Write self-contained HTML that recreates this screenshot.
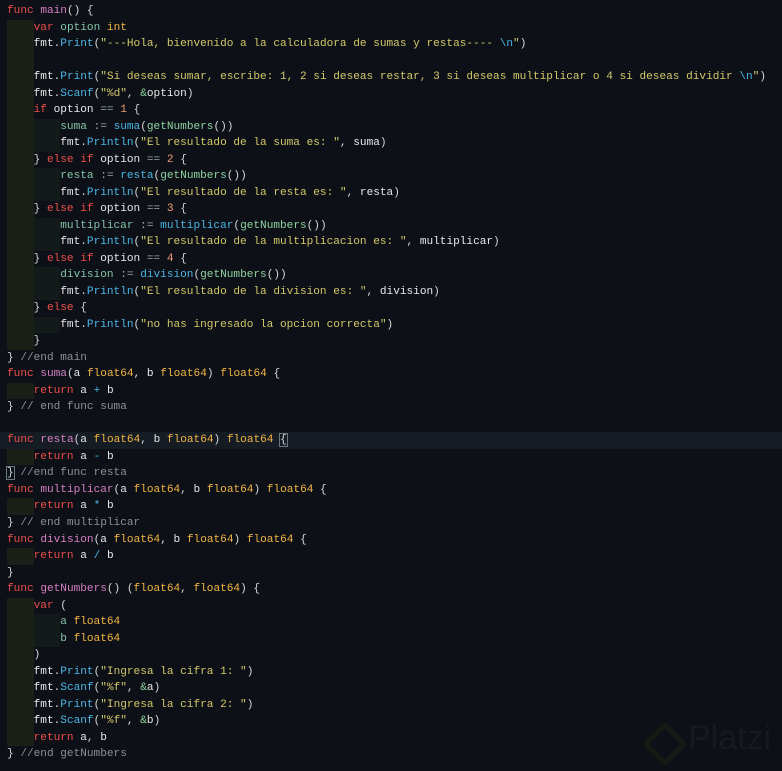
<!DOCTYPE html>
<html><head><meta charset="utf-8"><style>
html,body{margin:0;padding:0;background:#0d1117;width:782px;height:771px;overflow:hidden}
.c{position:absolute;left:7px;top:3px;font-family:"Liberation Mono","DejaVu Sans Mono",monospace;font-size:11.1px;color:#d6d6d6;white-space:normal}
.l{height:16.53px;line-height:16.53px;position:relative;white-space:pre}
.hl{background:#161c24;margin-left:-7px;padding-left:7px;width:775px}
.g1{display:inline-block;width:4ch;background:#1a1f17;height:16.53px;vertical-align:top}
.g2{display:inline-block;width:4ch;background:#121b19;height:16.53px;vertical-align:top}
.k{color:#ee4e4a}.f{color:#d77fc4}.v{color:#85c4a6}.s{color:#d3c86a}.t{color:#f2b544}
.p{color:#e8e8e8}.m{color:#4cb5e6}.n{color:#f29a78}.cm{color:#8b9099}.o{color:#9aa6b0}.e{color:#4cb5e6}
.gn{color:#8fd3a0}.bx{outline:1px solid #6b7a80}
.logo{position:absolute;left:643px;top:722px;width:40px;height:40px}
.pl{position:absolute;left:688px;top:719px;font-family:"Liberation Sans",sans-serif;font-size:34px;color:#141a20}
</style></head><body>
<div class="c">
<div class="l"><span class="k">func</span> <span class="f">main</span>() {</div>
<div class="l"><span class="g1"></span><span class="k">var</span> <span class="v">option</span> <span class="t">int</span></div>
<div class="l"><span class="g1"></span><span class="p">fmt</span>.<span class="m">Print</span>(<span class="s">"---Hola, bienvenido a la calculadora de sumas y restas---- </span><span class="e">\n</span><span class="s">"</span>)</div>
<div class="l"><span class="g1"></span></div>
<div class="l"><span class="g1"></span><span class="p">fmt</span>.<span class="m">Print</span>(<span class="s">"Si deseas sumar, escribe: 1, 2 si deseas restar, 3 si deseas multiplicar o 4 si deseas dividir </span><span class="e">\n</span><span class="s">"</span>)</div>
<div class="l"><span class="g1"></span><span class="p">fmt</span>.<span class="m">Scanf</span>(<span class="s">"%d"</span>, <span class="gn">&amp;</span><span class="p">option</span>)</div>
<div class="l"><span class="g1"></span><span class="k">if</span> <span class="p">option</span> <span class="o">==</span> <span class="n">1</span> {</div>
<div class="l"><span class="g1"></span><span class="g2"></span><span class="v">suma</span> <span class="o">:=</span> <span class="m">suma</span>(<span class="gn">getNumbers</span>())</div>
<div class="l"><span class="g1"></span><span class="g2"></span><span class="p">fmt</span>.<span class="m">Println</span>(<span class="s">"El resultado de la suma es: "</span>, <span class="p">suma</span>)</div>
<div class="l"><span class="g1"></span>} <span class="k">else if</span> <span class="p">option</span> <span class="o">==</span> <span class="n">2</span> {</div>
<div class="l"><span class="g1"></span><span class="g2"></span><span class="v">resta</span> <span class="o">:=</span> <span class="m">resta</span>(<span class="gn">getNumbers</span>())</div>
<div class="l"><span class="g1"></span><span class="g2"></span><span class="p">fmt</span>.<span class="m">Println</span>(<span class="s">"El resultado de la resta es: "</span>, <span class="p">resta</span>)</div>
<div class="l"><span class="g1"></span>} <span class="k">else if</span> <span class="p">option</span> <span class="o">==</span> <span class="n">3</span> {</div>
<div class="l"><span class="g1"></span><span class="g2"></span><span class="v">multiplicar</span> <span class="o">:=</span> <span class="m">multiplicar</span>(<span class="gn">getNumbers</span>())</div>
<div class="l"><span class="g1"></span><span class="g2"></span><span class="p">fmt</span>.<span class="m">Println</span>(<span class="s">"El resultado de la multiplicacion es: "</span>, <span class="p">multiplicar</span>)</div>
<div class="l"><span class="g1"></span>} <span class="k">else if</span> <span class="p">option</span> <span class="o">==</span> <span class="n">4</span> {</div>
<div class="l"><span class="g1"></span><span class="g2"></span><span class="v">division</span> <span class="o">:=</span> <span class="m">division</span>(<span class="gn">getNumbers</span>())</div>
<div class="l"><span class="g1"></span><span class="g2"></span><span class="p">fmt</span>.<span class="m">Println</span>(<span class="s">"El resultado de la division es: "</span>, <span class="p">division</span>)</div>
<div class="l"><span class="g1"></span>} <span class="k">else</span> {</div>
<div class="l"><span class="g1"></span><span class="g2"></span><span class="p">fmt</span>.<span class="m">Println</span>(<span class="s">"no has ingresado la opcion correcta"</span>)</div>
<div class="l"><span class="g1"></span>}</div>
<div class="l">} <span class="cm">//end main</span></div>
<div class="l"><span class="k">func</span> <span class="f">suma</span>(<span class="p">a</span> <span class="t">float64</span>, <span class="p">b</span> <span class="t">float64</span>) <span class="t">float64</span> {</div>
<div class="l"><span class="g1"></span><span class="k">return</span> <span class="p">a</span> <span class="e">+</span> <span class="p">b</span></div>
<div class="l">} <span class="cm">// end func suma</span></div>
<div class="l"></div>
<div class="l hl"><span class="k">func</span> <span class="f">resta</span>(<span class="p">a</span> <span class="t">float64</span>, <span class="p">b</span> <span class="t">float64</span>) <span class="t">float64</span> <span class="bx">{</span></div>
<div class="l"><span class="g1"></span><span class="k">return</span> <span class="p">a</span> <span class="e">-</span> <span class="p">b</span></div>
<div class="l"><span class="bx">}</span> <span class="cm">//end func resta</span></div>
<div class="l"><span class="k">func</span> <span class="f">multiplicar</span>(<span class="p">a</span> <span class="t">float64</span>, <span class="p">b</span> <span class="t">float64</span>) <span class="t">float64</span> {</div>
<div class="l"><span class="g1"></span><span class="k">return</span> <span class="p">a</span> <span class="e">*</span> <span class="p">b</span></div>
<div class="l">} <span class="cm">// end multiplicar</span></div>
<div class="l"><span class="k">func</span> <span class="f">division</span>(<span class="p">a</span> <span class="t">float64</span>, <span class="p">b</span> <span class="t">float64</span>) <span class="t">float64</span> {</div>
<div class="l"><span class="g1"></span><span class="k">return</span> <span class="p">a</span> <span class="e">/</span> <span class="p">b</span></div>
<div class="l">}</div>
<div class="l"><span class="k">func</span> <span class="f">getNumbers</span>() (<span class="t">float64</span>, <span class="t">float64</span>) {</div>
<div class="l"><span class="g1"></span><span class="k">var</span> (</div>
<div class="l"><span class="g1"></span><span class="g2"></span><span class="v">a</span> <span class="t">float64</span></div>
<div class="l"><span class="g1"></span><span class="g2"></span><span class="v">b</span> <span class="t">float64</span></div>
<div class="l"><span class="g1"></span>)</div>
<div class="l"><span class="g1"></span><span class="p">fmt</span>.<span class="m">Print</span>(<span class="s">"Ingresa la cifra 1: "</span>)</div>
<div class="l"><span class="g1"></span><span class="p">fmt</span>.<span class="m">Scanf</span>(<span class="s">"%f"</span>, <span class="gn">&amp;</span><span class="p">a</span>)</div>
<div class="l"><span class="g1"></span><span class="p">fmt</span>.<span class="m">Print</span>(<span class="s">"Ingresa la cifra 2: "</span>)</div>
<div class="l"><span class="g1"></span><span class="p">fmt</span>.<span class="m">Scanf</span>(<span class="s">"%f"</span>, <span class="gn">&amp;</span><span class="p">b</span>)</div>
<div class="l"><span class="g1"></span><span class="k">return</span> <span class="p">a</span>, <span class="p">b</span></div>
<div class="l">} <span class="cm">//end getNumbers</span></div>
</div>
<div class="logo"><div style="position:absolute;left:6px;top:6px;width:22px;height:22px;border:5px solid #141a14;border-radius:4px;transform:rotate(45deg)"></div></div>
<div class="pl">Platzi</div>
</body></html>
